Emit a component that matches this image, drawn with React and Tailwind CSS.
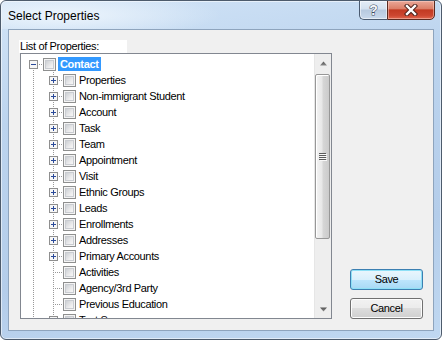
import React from "react";

const nodes = [
  { label: "Properties", expandable: true },
  { label: "Non-immigrant Student", expandable: true },
  { label: "Account", expandable: true },
  { label: "Task", expandable: true },
  { label: "Team", expandable: true },
  { label: "Appointment", expandable: true },
  { label: "Visit", expandable: true },
  { label: "Ethnic Groups", expandable: true },
  { label: "Leads", expandable: true },
  { label: "Enrollments", expandable: true },
  { label: "Addresses", expandable: true },
  { label: "Primary Accounts", expandable: true },
  { label: "Activities", expandable: false },
  { label: "Agency/3rd Party", expandable: false },
  { label: "Previous Education", expandable: false },
  { label: "Test Scores", expandable: true },
];

const DOT = "#999999";

// tree lines + expander box for one row
const Connector = ({ level, expandable, expanded, first }) => {
  const w = (level + 1) * 20;
  const cx = level * 20 + 10;
  return (
    <svg width={w} height={16} className="shrink-0" shapeRendering="crispEdges">
      {level > 0 && (
        <line x1={10.5} y1={0} x2={10.5} y2={16} stroke={DOT} strokeDasharray="1 1" />
      )}
      <line x1={cx + 0.5} y1={first ? 8 : 0} x2={cx + 0.5} y2={16} stroke={DOT} strokeDasharray="1 1" />
      <line x1={expandable ? cx + 6 : cx + 2} y1={8.5} x2={w} y2={8.5} stroke={DOT} strokeDasharray="1 1" />
      {expandable && (
        <g>
          <rect x={cx - 3.5} y={4.5} width={8} height={8} fill="#f7f7f7" stroke="#8f8f8f" />
          <line x1={cx - 2} y1={8.5} x2={cx + 3} y2={8.5} stroke="#2a4a9a" />
          {!expanded && <line x1={cx + 0.5} y1={6} x2={cx + 0.5} y2={11} stroke="#2a4a9a" />}
        </g>
      )}
    </svg>
  );
};

const CheckBox = () => (
  <div className="w-[13px] h-[13px] shrink-0 border border-[#8e8f8f] bg-[#f4f4f4] p-[1px]">
    <div className="w-full h-full border border-[#c9ccd1] bg-[linear-gradient(135deg,#cdd0d4,#eeeeef_70%,#f6f6f6)]" />
  </div>
);

const TreeRow = ({ level, label, expandable, expanded, first, selected }) => (
  <div className="flex items-center h-[16px] shrink-0">
    <Connector level={level} expandable={expandable} expanded={expanded} first={first} />
    <CheckBox />
    <span
      className={
        selected
          ? "ml-[2px] px-[2px] h-[14px] leading-[14px] bg-[#3399ff] text-white font-bold whitespace-nowrap"
          : "ml-[1px] px-[2px] h-[14px] leading-[14px] text-black whitespace-nowrap"
      }
    >
      {label}
    </span>
  </div>
);

const Arrow = ({ down }) => (
  <svg width="9" height="5" viewBox="0 0 9 5">
    <defs>
      <linearGradient id={down ? "ad" : "au"} x1="0" y1="0" x2="0" y2="1">
        <stop offset="0" stopColor="#555" />
        <stop offset="1" stopColor="#8a8a8a" />
      </linearGradient>
    </defs>
    <polygon points={down ? "1,0.5 8,0.5 4.5,4.5" : "1,4.5 8,4.5 4.5,0.5"} fill={`url(#${down ? "ad" : "au"})`} />
  </svg>
);

const ScrollBar = () => (
  <div className="w-[17px] shrink-0 flex flex-col bg-[#eeeeee] border-l border-[#e6e6e6]">
    <div className="h-[17px] flex items-center justify-center pt-[1px]">
      <Arrow />
    </div>
    <div className="mt-[3px] h-[165px] w-[15px] rounded-[2px] border border-[#979797] bg-[linear-gradient(90deg,#f3f3f3,#e8e8e8_45%,#d6d6d6_55%,#cbcbcb)] shadow-[inset_1px_1px_0_#fff] flex items-center justify-center">
      <svg width="8" height="8" shapeRendering="crispEdges">
        {[0, 2, 4, 6].map((y) => (
          <g key={y}>
            <line x1="0" y1={y + 0.5} x2="7" y2={y + 0.5} stroke="#5c5c5c" />
            <line x1="1" y1={y + 1.5} x2="8" y2={y + 1.5} stroke="#f8f8f8" />
          </g>
        ))}
      </svg>
    </div>
    <div className="flex-1" />
    <div className="h-[17px] flex items-center justify-center pb-[1px]">
      <Arrow down />
    </div>
  </div>
);

export default function App() {
  return (
    <div className="w-[442px] h-[340px] flex flex-col rounded-[6px] border border-[#4d5b6c] bg-[linear-gradient(170deg,#d2e4f7,#bcd4ee_30%,#b4cdea_70%,#c0d8f1)] shadow-[inset_0_0_0_1px_rgba(255,255,255,0.55)] overflow-hidden font-['Liberation_Sans',Arial,sans-serif]">
      {/* title bar */}
      <div className="h-[28px] flex shrink-0 bg-[radial-gradient(ellipse_160px_24px_at_60px_14px,rgba(240,247,253,0.9),rgba(240,247,253,0))]">
        <div className="pl-[7px] self-center text-[12px] text-black mt-[1px]">Select Properties</div>
        <div className="ml-auto mr-[6px] -mt-px flex self-start">
          <div className="w-[28px] h-[20px] flex items-center justify-center rounded-bl-[5px] border border-[#4a5a70] border-r-0 bg-[linear-gradient(#e4ecf6,#d4e1ef_45%,#b7c9df_50%,#c9d9ec)] shadow-[inset_0_0_0_1px_rgba(255,255,255,0.55)]">
            <span className="text-[14px] font-bold leading-none text-[#f4f6f9] [-webkit-text-stroke:1px_#3d4b5e] [paint-order:stroke_fill]">?</span>
          </div>
          <div className="w-[48px] h-[20px] flex items-center justify-center rounded-br-[5px] border border-[#5b2a20] bg-[linear-gradient(#eaa898,#dc7f69_42%,#c23a22_50%,#cc4630_80%,#e0684f)] shadow-[inset_0_0_0_1px_rgba(255,220,210,0.45)]">
            <svg width="14" height="12" viewBox="0 0 14 12">
              <path d="M3 2 L11 10 M11 2 L3 10" stroke="#4b2019" strokeWidth="4.4" strokeLinecap="square" />
              <path d="M3 2 L11 10 M11 2 L3 10" stroke="#ffffff" strokeWidth="2.4" strokeLinecap="square" />
            </svg>
          </div>
        </div>
      </div>

      {/* client area */}
      <div className="mx-[7px] h-[302px] shrink-0 border border-[#8ea4bd] bg-[#f0f0f0] flex pl-[11px] pt-[10px] pb-[11px] pr-[10px] text-[11px] tracking-[-0.35px] text-black">
        <div className="flex flex-col w-[312px]">
          <div className="w-[108px] h-[13px] -ml-px pl-px bg-white leading-[13px]">List of Properties:</div>
          <div className="h-[266px] border border-[#828790] bg-white flex">
            <div className="flex-1 flex flex-col overflow-hidden pt-[2px] pl-[2px]">
              <TreeRow level={0} label="Contact" expandable expanded first selected />
              {nodes.map((n) => (
                <TreeRow key={n.label} level={1} label={n.label} expandable={n.expandable} />
              ))}
            </div>
            <ScrollBar />
          </div>
        </div>
        <div className="ml-[18px] flex flex-col justify-end gap-[8px]">
          <button className="w-[73px] h-[21px] rounded-[3px] border border-[#3c7fb1] bg-[linear-gradient(#eaf6fd,#d9f0fc_50%,#bee6fd_50%,#a7d9f5)] shadow-[inset_0_0_0_1px_#8ee0f6] leading-none">
            Save
          </button>
          <button className="w-[73px] h-[21px] rounded-[3px] border border-[#707070] bg-[linear-gradient(#f2f2f2,#ebebeb_50%,#dddddd_50%,#cfcfcf)] shadow-[inset_0_0_0_1px_#fcfcfc] leading-none">
            Cancel
          </button>
        </div>
      </div>
    </div>
  );
}
